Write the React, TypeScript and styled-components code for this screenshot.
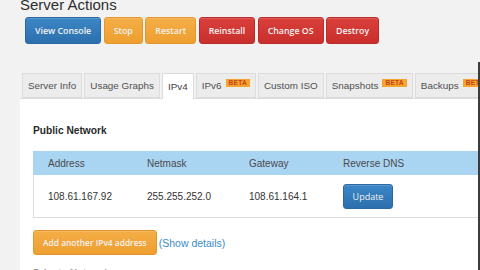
import React from "react";
import styled, { createGlobalStyle, css } from "styled-components";

const GlobalStyle = createGlobalStyle`
  html, body { margin: 0; padding: 0; }
  body {
    background: #f2f2f2;
    font-family: "Liberation Sans", Arial, sans-serif;
    color: #333;
  }
`;

const Page = styled.div`
  position: relative;
  width: 480px;
  height: 270px;
  overflow: hidden;
  box-sizing: border-box;
  padding-left: 20px;
  background: #f2f2f2;
  &::after {
    content: "";
    position: absolute;
    top: 62px;
    right: 0;
    bottom: 0;
    width: 2px;
    background: #3c3c3c;
  }
`;

const Title = styled.h2`
  margin: -4px 0 0 0;
  font-size: 15px;
  line-height: 18px;
  font-weight: normal;
  color: #2e2e2e;
`;

const ActionBar = styled.div`
  display: flex;
  gap: 2.5px;
  margin: 3px 0 0 5px;
`;

type Variant = "primary" | "warning" | "danger";

const variants: Record<Variant, ReturnType<typeof css>> = {
  primary: css`
    background: linear-gradient(#3d86c6, #2c6fae);
    border-color: #2a67a3;
  `,
  warning: css`
    background: linear-gradient(#f4ae47, #ee9f2f);
    border-color: #e4962a;
  `,
  danger: css`
    background: linear-gradient(#d9403c, #c92f2c);
    border-color: #bb2b28;
  `,
};

const Button = styled.button<{ $variant: Variant; $small?: boolean }>`
  box-sizing: border-box;
  height: ${(p) => (p.$small ? 25 : 27)}px;
  padding: 0 9px;
  border: 1px solid;
  border-radius: 3px;
  color: #f1f1f1;
  font-family: "Open Sans", sans-serif;
  font-size: ${(p) => (p.$small ? 8.4 : 8.8)}px;
  font-weight: 600;
  cursor: pointer;
  white-space: nowrap;
  box-shadow: inset 0 1px 0 rgba(255, 255, 255, 0.15);
  ${(p) => variants[p.$variant]}
`;

const TabBar = styled.div`
  display: flex;
  gap: 2px;
  margin-top: 29px;
  padding-left: 2px;
  height: 25px;
  border-bottom: 1px solid #dcdcdc;
  white-space: nowrap;
`;

const Tab = styled.div<{ $active?: boolean }>`
  box-sizing: border-box;
  display: flex;
  align-items: center;
  gap: 4px;
  padding: 0 5px;
  height: ${(p) => (p.$active ? 26 : 25)}px;
  font-size: 9.9px;
  color: ${(p) => (p.$active ? "#444" : "#505050")};
  background: ${(p) => (p.$active ? "#ffffff" : "#ececec")};
  border: 1px solid #dcdcdc;
  border-bottom: ${(p) => (p.$active ? "none" : "1px solid #dcdcdc")};
  flex-shrink: 0;
`;

const Beta = styled.span`
  display: inline-block;
  background: #f5a52e;
  color: #c4431d;
  font-size: 6.5px;
  font-weight: bold;
  line-height: 8px;
  padding: 0 3px;
  margin-top: -5px;
  letter-spacing: 0.3px;
`;

const Panel = styled.div`
  background: #ffffff;
  padding: 25px 0 0 13px;
  height: 200px;
`;

const SectionTitle = styled.div`
  font-size: 10.2px;
  font-weight: bold;
  line-height: 14px;
  color: #2a2a2a;
`;

const Table = styled.div`
  margin-top: 13px;
  width: 470px;
`;

const Row = styled.div<{ $head?: boolean }>`
  display: grid;
  grid-template-columns: 99px 102px 94px 1fr;
  align-items: center;
  padding-left: 14px;
  height: ${(p) => (p.$head ? 24 : 42)}px;
  font-size: 10px;
  color: ${(p) => (p.$head ? "#4a4a4a" : "#333")};
  background: ${(p) => (p.$head ? "#aad5f2" : "#ffffff")};
  border-left: 1px solid ${(p) => (p.$head ? "#aad5f2" : "#dddddd")};
  border-bottom: ${(p) => (p.$head ? "none" : "1px solid #dddddd")};
`;

const UpdateButton = styled(Button)`
  width: 50px;
  padding: 0;
  font-size: 9px;
  font-weight: normal;
`;

const Actions = styled.div`
  display: flex;
  align-items: center;
  gap: 2px;
  margin-top: 12px;
`;

const Link = styled.a`
  color: #3a8ccc;
  font-size: 10.5px;
  text-decoration: none;
`;

const NextTitle = styled(SectionTitle)`
  margin-top: 12px;
  color: #999;
`;

export default function App() {
  return (
    <>
      <GlobalStyle />
      <Page>
        <Title>Server Actions</Title>
        <ActionBar>
          <Button $variant="primary">View Console</Button>
          <Button $variant="warning">Stop</Button>
          <Button $variant="warning">Restart</Button>
          <Button $variant="danger">Reinstall</Button>
          <Button $variant="danger">Change OS</Button>
          <Button $variant="danger">Destroy</Button>
        </ActionBar>
        <TabBar>
          <Tab>Server Info</Tab>
          <Tab>Usage Graphs</Tab>
          <Tab $active>IPv4</Tab>
          <Tab>
            IPv6 <Beta>BETA</Beta>
          </Tab>
          <Tab>Custom ISO</Tab>
          <Tab>
            Snapshots <Beta>BETA</Beta>
          </Tab>
          <Tab>
            Backups <Beta>BETA</Beta>
          </Tab>
        </TabBar>
        <Panel>
          <SectionTitle>Public Network</SectionTitle>
          <Table>
            <Row $head>
              <span>Address</span>
              <span>Netmask</span>
              <span>Gateway</span>
              <span>Reverse DNS</span>
            </Row>
            <Row>
              <span>108.61.167.92</span>
              <span>255.255.252.0</span>
              <span>108.61.164.1</span>
              <span>
                <UpdateButton $variant="primary" $small>
                  Update
                </UpdateButton>
              </span>
            </Row>
          </Table>
          <Actions>
            <Button $variant="warning" $small>
              Add another IPv4 address
            </Button>
            <Link href="#">(Show details)</Link>
          </Actions>
          <NextTitle>Private Network</NextTitle>
        </Panel>
      </Page>
    </>
  );
}
